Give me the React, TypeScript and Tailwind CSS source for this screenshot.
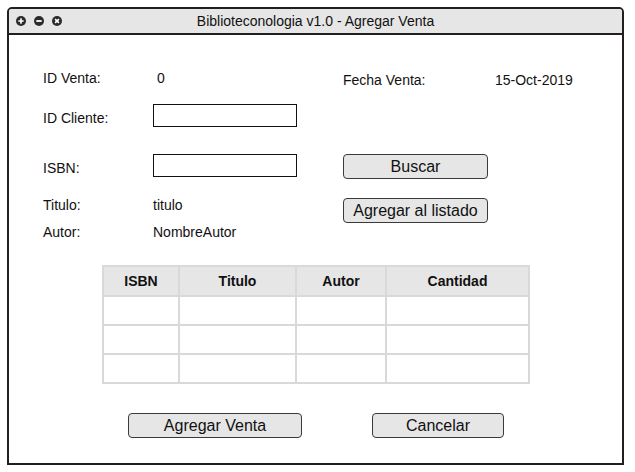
import React from 'react'

const font = { fontFamily: '"Liberation Sans", Arial, Helvetica, sans-serif' }

function WinIcon({ kind }: { kind: 'plus' | 'minus' | 'close' }) {
  return (
    <svg width="10" height="10" viewBox="0 0 10 10">
      <circle cx="5" cy="5" r="5" fill="#2b2b2b" />
      {kind === 'plus' && (
        <path d="M5 2.3v5.4M2.3 5h5.4" stroke="#fff" strokeWidth="1.6" />
      )}
      {kind === 'minus' && <path d="M2.3 5h5.4" stroke="#fff" strokeWidth="1.8" />}
      {kind === 'close' && (
        <path d="M3.1 3.1l3.8 3.8M6.9 3.1l-3.8 3.8" stroke="#fff" strokeWidth="1.6" />
      )}
    </svg>
  )
}

function Btn({ children, className }: { children: React.ReactNode; className: string }) {
  return (
    <button
      className={`h-[25px] rounded-[4px] border border-[#3a3a3a] bg-[#e6e6e6] text-[16px] leading-none text-[#111] ${className}`}
    >
      {children}
    </button>
  )
}

const cols = 'grid grid-cols-[74px_2px_115px_2px_88px_2px_141px]'

function Row({ header }: { header?: boolean }) {
  const labels = ['ISBN', 'Titulo', 'Autor', 'Cantidad']
  return (
    <div className={`${cols} ${header ? 'h-[28px] bg-[#e6e6e6]' : 'h-[27px] bg-white'}`}>
      {labels.map((l, i) => (
        <React.Fragment key={l}>
          {i > 0 && <div className="bg-[#d9d9d9]" />}
          <div className="flex items-center justify-center text-[14px] font-bold text-[#111]">
            {header ? l : ''}
          </div>
        </React.Fragment>
      ))}
    </div>
  )
}

export default function App() {
  return (
    <div className="h-[472px] w-[635px] bg-white pl-[7px] pt-[7px]" style={font}>
      <div className="flex h-[458px] w-[617px] flex-col rounded-t-[5px] border-2 border-[#231f20]">
        {/* Title bar */}
        <div className="grid h-[26px] grid-cols-[1fr_auto_1fr] items-center border-b-2 border-[#231f20] bg-[#e6e6e6] rounded-t-[3px]">
          <div className="flex items-center gap-[8px] pl-[7px]">
            <WinIcon kind="plus" />
            <WinIcon kind="minus" />
            <WinIcon kind="close" />
          </div>
          <div className="text-[14px] text-[#111]">Biblioteconologia v1.0 - Agregar Venta</div>
          <div />
        </div>

        {/* Form */}
        <div className="flex h-[207px] pl-[34px] text-[14px] text-[#111]">
          <div className="flex w-[300px] flex-col">
            <div className="mt-[33px] flex h-[20px] items-center">
              <span className="w-[110px]">ID Venta:</span>
              <span className="pl-[4px]">0</span>
            </div>
            <div className="mt-[16px] flex h-[23px] items-center">
              <span className="mt-[5px] w-[110px]">ID Cliente:</span>
              <input className="h-[23px] w-[144px] border border-[#111] bg-white outline-none" />
            </div>
            <div className="mt-[27px] flex h-[23px] items-center">
              <span className="mt-[5px] w-[110px]">ISBN:</span>
              <input className="h-[23px] w-[144px] border border-[#111] bg-white outline-none" />
            </div>
            <div className="mt-[18px] flex h-[20px] items-center">
              <span className="w-[110px]">Titulo:</span>
              <span>titulo</span>
            </div>
            <div className="mt-[7px] flex h-[20px] items-center">
              <span className="w-[110px]">Autor:</span>
              <span>NombreAutor</span>
            </div>
          </div>
          <div className="flex flex-col">
            <div className="mt-[35px] flex h-[20px] items-center">
              <span className="w-[152px]">Fecha Venta:</span>
              <span>15-Oct-2019</span>
            </div>
            <Btn className="mt-[64px] w-[145px]">Buscar</Btn>
            <Btn className="mt-[19px] w-[145px]">Agregar al listado</Btn>
          </div>
        </div>

        {/* Table */}
        <div className="ml-[93px] mt-[23px] w-[428px] border-2 border-[#d9d9d9]">
          <Row header />
          <div className="h-[2px] bg-[#d9d9d9]" />
          <Row />
          <div className="h-[2px] bg-[#d9d9d9]" />
          <Row />
          <div className="h-[2px] bg-[#d9d9d9]" />
          <Row />
        </div>

        {/* Actions */}
        <div className="ml-[119px] mt-[29px] flex gap-[70px]">
          <Btn className="w-[174px]">Agregar Venta</Btn>
          <Btn className="w-[132px]">Cancelar</Btn>
        </div>
      </div>
    </div>
  )
}
